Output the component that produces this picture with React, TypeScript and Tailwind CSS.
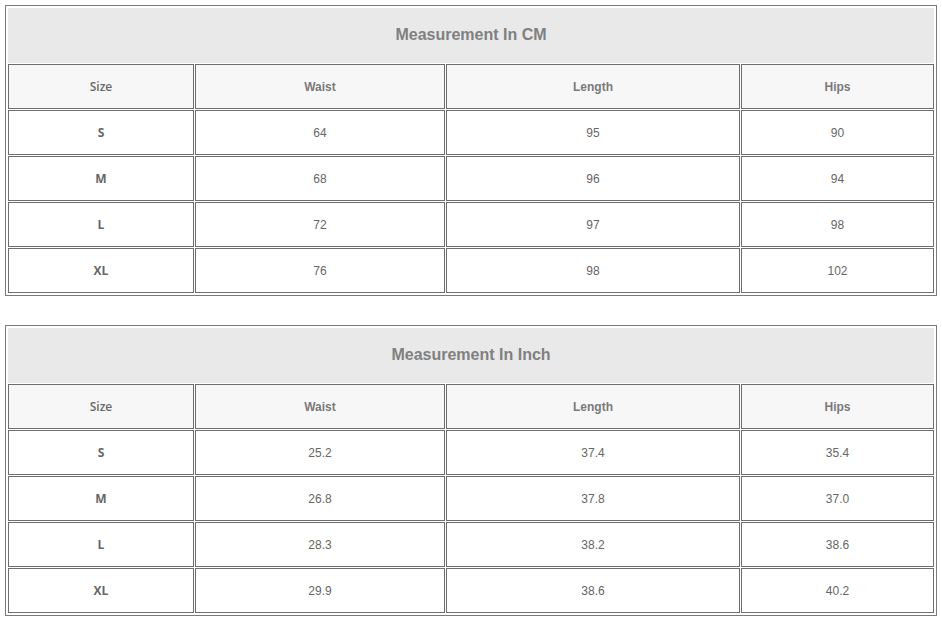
import React from "react";

type Row = [string, string, string, string];

const cmRows: Row[] = [
  ["S", "64", "95", "90"],
  ["M", "68", "96", "94"],
  ["L", "72", "97", "98"],
  ["XL", "76", "98", "102"],
];

const inchRows: Row[] = [
  ["S", "25.2", "37.4", "35.4"],
  ["M", "26.8", "37.8", "37.0"],
  ["L", "28.3", "38.2", "38.6"],
  ["XL", "29.9", "38.6", "40.2"],
];

const widths = ["w-[186px]", "w-[250px]", "w-[294px]", "w-[193px]"];

function Cell({ w, children, className }: { w: string; children: React.ReactNode; className: string }) {
  return (
    <div
      className={`${w} h-[45px] shrink-0 border border-[#6e6e6e] flex items-center justify-center text-[12px] leading-none ${className}`}
    >
      {children}
    </div>
  );
}

function SizeTable({ title, rows }: { title: string; rows: Row[] }) {
  return (
    <div className="w-[932px] border border-[#7a7a7a] p-[2px] flex flex-col gap-[1px] bg-white">
      <div className="h-[55px] bg-[#e9e9e9] flex items-center justify-center pb-[2px]">
        <span className="text-[16px] font-bold text-[#808080] font-['Liberation_Sans',Arial,sans-serif]">{title}</span>
      </div>
      <div className="flex gap-[1px]">
        <Cell w={widths[0]} className="bg-[#f7f7f7] font-semibold text-[#6a6a6a] font-['Open_Sans',sans-serif]">Size</Cell>
        <Cell w={widths[1]} className="bg-[#f7f7f7] font-bold text-[#7a7a7a] font-['Liberation_Sans',Arial,sans-serif]">Waist</Cell>
        <Cell w={widths[2]} className="bg-[#f7f7f7] font-bold text-[#7a7a7a] font-['Liberation_Sans',Arial,sans-serif]">Length</Cell>
        <Cell w={widths[3]} className="bg-[#f7f7f7] font-bold text-[#7a7a7a] font-['Liberation_Sans',Arial,sans-serif]">Hips</Cell>
      </div>
      {rows.map((r) => (
        <div key={r[0]} className="flex gap-[1px]">
          <Cell w={widths[0]} className="bg-white font-bold text-[#666666] font-['Open_Sans',sans-serif]">{r[0]}</Cell>
          <Cell w={widths[1]} className="bg-white text-[#666666] font-['Liberation_Sans',Arial,sans-serif]">{r[1]}</Cell>
          <Cell w={widths[2]} className="bg-white text-[#666666] font-['Liberation_Sans',Arial,sans-serif]">{r[2]}</Cell>
          <Cell w={widths[3]} className="bg-white text-[#666666] font-['Liberation_Sans',Arial,sans-serif]">{r[3]}</Cell>
        </div>
      ))}
    </div>
  );
}

export default function App() {
  return (
    <div className="w-[942px] h-[618px] bg-white pl-[5px] pt-[5px] flex flex-col gap-[29px]">
      <SizeTable title="Measurement In CM" rows={cmRows} />
      <SizeTable title="Measurement In Inch" rows={inchRows} />
    </div>
  );
}
